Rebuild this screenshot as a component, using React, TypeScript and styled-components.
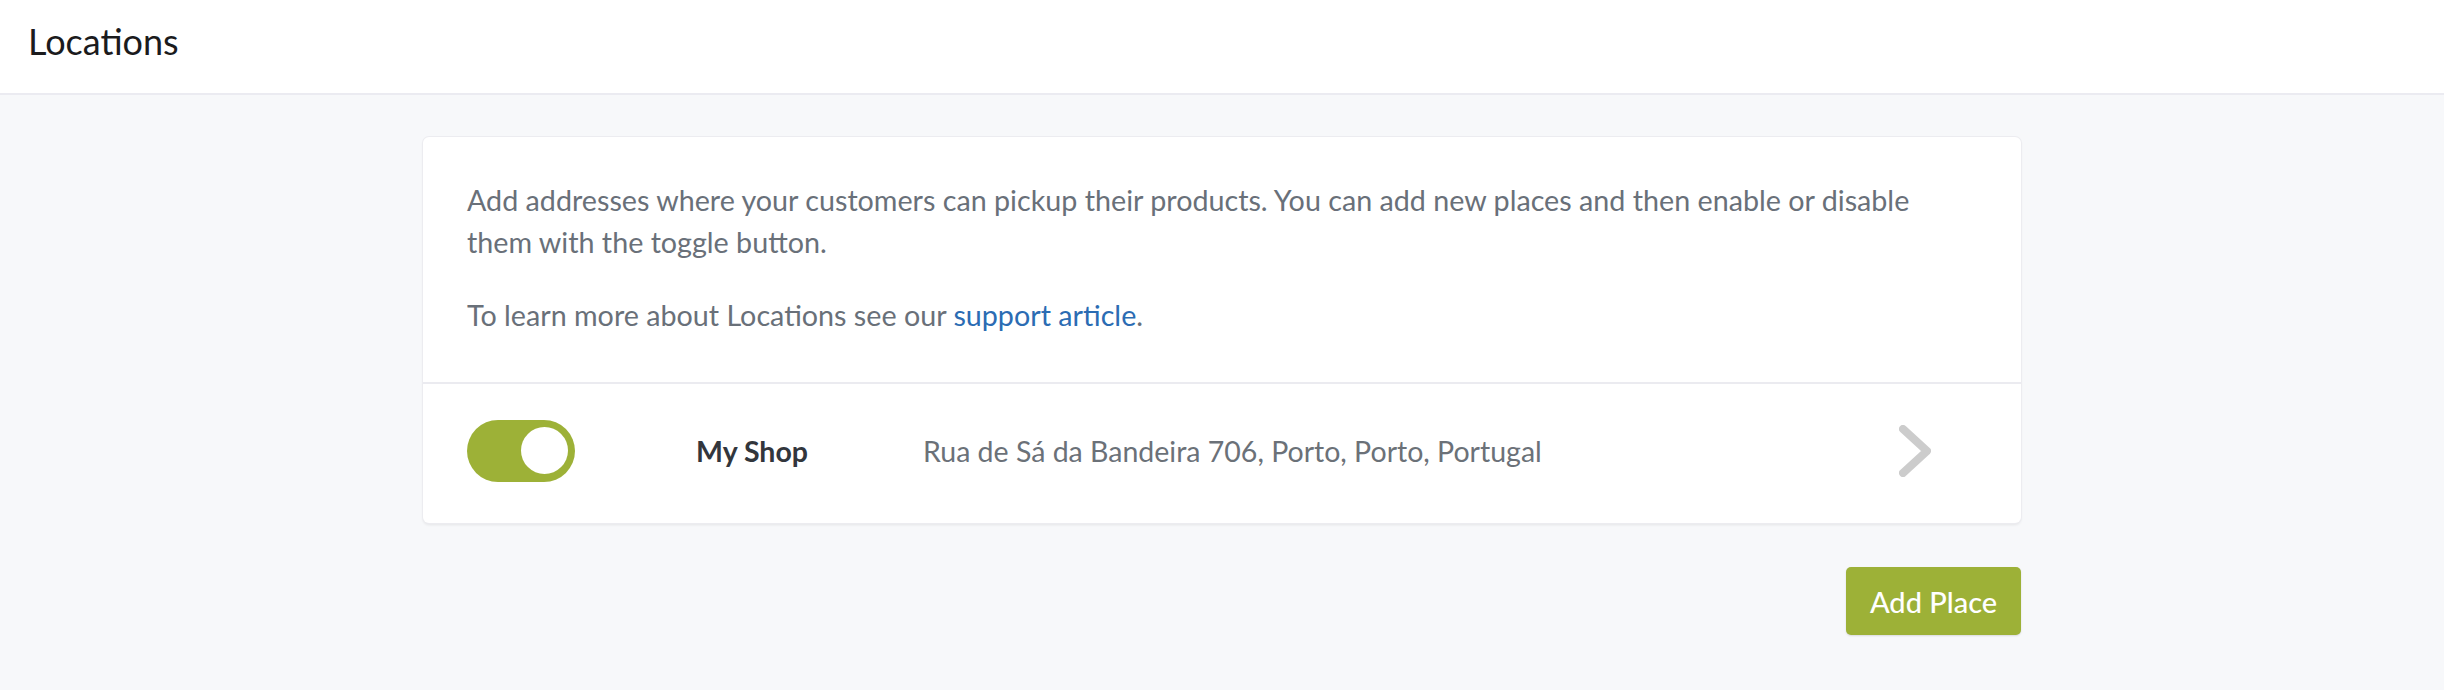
import React from "react";
import styled, { createGlobalStyle } from "styled-components";

const GlobalStyle = createGlobalStyle`
  html, body {
    margin: 0;
    padding: 0;
    background: #f7f8fa;
    font-family: "Lato", "Liberation Sans", sans-serif;
  }
  * { box-sizing: border-box; }
`;

const Page = styled.div`
  min-height: 690px;
  background: #f7f8fa;
`;

const Header = styled.header`
  height: 95px;
  background: #ffffff;
  border-bottom: 2px solid #ebebf1;
  padding: 20px 28px 0;
`;

const Title = styled.h1`
  margin: 0;
  font-size: 36px;
  line-height: 1.2;
  font-weight: 400;
  color: #1b1b1d;
`;

const Main = styled.main`
  width: 1598px;
  margin: 0 auto;
  padding-top: 42px;
  display: flex;
  flex-direction: column;
  align-items: flex-end;
  gap: 44px;
`;

const Card = styled.section`
  width: 100%;
  background: #ffffff;
  border-radius: 6px;
  box-shadow: 0 0 0 1px #ececf0, 0 2px 3px rgba(0, 0, 0, 0.08);
  overflow: hidden;
`;

const Intro = styled.div`
  padding: 42px 70px 46px 44px;
  border-bottom: 2px solid #ebebf0;
`;

const Paragraph = styled.p`
  margin: 0;
  font-size: 28.7px;
  line-height: 42px;
  color: #697079;
  & + & {
    margin-top: 31px;
  }
`;

const Link = styled.a`
  color: #2b6cb3;
  text-decoration: none;
`;

const Row = styled.div`
  height: 139px;
  display: grid;
  grid-template-columns: 229px 227px 1fr auto;
  align-items: center;
  padding: 0 90px 0 44px;
`;

const Toggle = styled.div<{ $on: boolean }>`
  width: 108px;
  height: 62px;
  border-radius: 31px;
  background: ${(p) => (p.$on ? "#9db137" : "#d5d7db")};
  display: flex;
  align-items: center;
  justify-content: ${(p) => (p.$on ? "flex-end" : "flex-start")};
  padding: 0 7px;
  margin-top: -6px;
`;

const Knob = styled.span`
  width: 47px;
  height: 47px;
  border-radius: 50%;
  background: #ffffff;
`;

const Name = styled.span`
  font-size: 28.5px;
  font-weight: 700;
  color: #32363c;
  margin-top: -5px;
`;

const Address = styled.span`
  font-size: 28.5px;
  color: #6b7178;
  margin-top: -5px;
`;

const Chevron = styled.svg`
  width: 32px;
  height: 52px;
  margin-top: -6px;
`;

const Button = styled.button`
  width: 175px;
  height: 68px;
  border: none;
  border-radius: 5px;
  background: #9db137;
  color: #ffffff;
  font-family: "Lato", "Liberation Sans", sans-serif;
  font-size: 29px;
  font-weight: 500;
  box-shadow: 0 1px 2px rgba(0, 0, 0, 0.12);
  cursor: pointer;
`;

export default function App() {
  return (
    <Page>
      <GlobalStyle />
      <Header>
        <Title>Locations</Title>
      </Header>
      <Main>
        <Card>
          <Intro>
            <Paragraph>
              Add addresses where your customers can pickup their products. You can add new places and then enable or
              disable them with the toggle button.
            </Paragraph>
            <Paragraph>
              To learn more about Locations see our <Link href="#">support article</Link>.
            </Paragraph>
          </Intro>
          <Row>
            <Toggle $on>
              <Knob />
            </Toggle>
            <Name>My Shop</Name>
            <Address>Rua de Sá da Bandeira 706, Porto, Porto, Portugal</Address>
            <Chevron viewBox="0 0 32 52">
              <polyline
                points="4,4 28,26 4,48"
                fill="none"
                stroke="#cccccc"
                strokeWidth="8"
                strokeLinecap="round"
                strokeLinejoin="round"
              />
            </Chevron>
          </Row>
        </Card>
        <Button>Add Place</Button>
      </Main>
    </Page>
  );
}
